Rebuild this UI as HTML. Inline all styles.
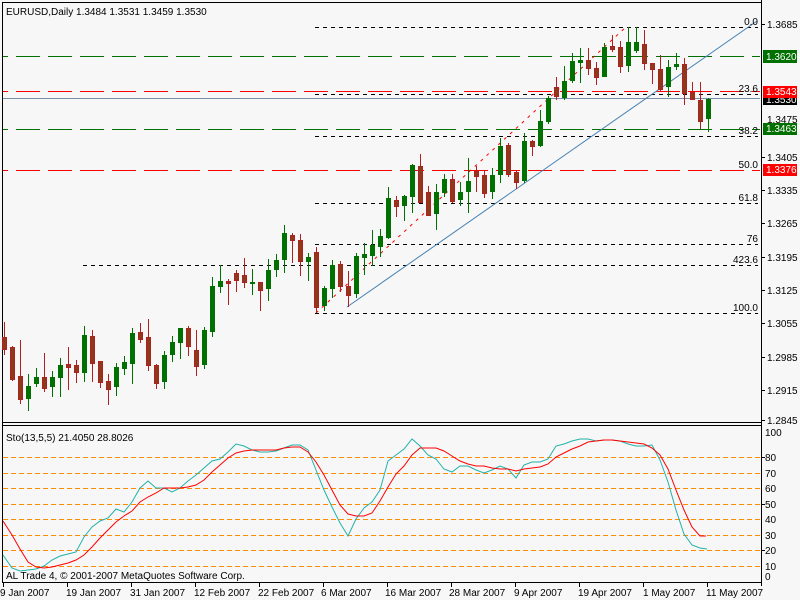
<!DOCTYPE html>
<html><head><meta charset="utf-8"><style>
html,body{margin:0;padding:0;background:#f7f7f7;}
svg{display:block;font-family:"Liberation Sans",sans-serif;font-size:10px;}
</style></head><body>
<svg width="800" height="600" viewBox="0 0 800 600" xmlns="http://www.w3.org/2000/svg">
<rect width="800" height="600" fill="#f7f7f7"/>
<g shape-rendering="crispEdges">
<line x1="2.5" y1="2" x2="2.5" y2="582" stroke="#000"/>
<line x1="2" y1="2.5" x2="761" y2="2.5" stroke="#000"/>
<line x1="761.5" y1="0" x2="761.5" y2="586" stroke="#000"/>
<line x1="2" y1="422.5" x2="761" y2="422.5" stroke="#000"/>
<line x1="2" y1="425.5" x2="761" y2="425.5" stroke="#000"/>
<line x1="2" y1="582.5" x2="761" y2="582.5" stroke="#000"/>

<line x1="3" y1="56.5" x2="760" y2="56.5" stroke="#007000" stroke-dasharray="24 8" stroke-dashoffset="19"/>
<line x1="3" y1="129.5" x2="760" y2="129.5" stroke="#007000" stroke-dasharray="24 8" stroke-dashoffset="19"/>
<line x1="3" y1="91.5" x2="760" y2="91.5" stroke="#ff0000" stroke-dasharray="24 8" stroke-dashoffset="19"/>
<line x1="3" y1="170.5" x2="760" y2="170.5" stroke="#ff0000" stroke-dasharray="24 8" stroke-dashoffset="19"/>
<line x1="3" y1="98.5" x2="760" y2="98.5" stroke="#7890a8"/>
<g stroke="#000" stroke-dasharray="4 4">
<line x1="315" y1="27.5" x2="758" y2="27.5"/>
<line x1="315" y1="94.5" x2="758" y2="94.5"/>
<line x1="315" y1="136.5" x2="758" y2="136.5"/>
<line x1="315" y1="203.5" x2="758" y2="203.5"/>
<line x1="315" y1="244.5" x2="758" y2="244.5"/>
<line x1="83" y1="265.5" x2="758" y2="265.5"/>
<line x1="315" y1="313.5" x2="758" y2="313.5"/>
</g>
</g>
<line x1="316" y1="313" x2="626" y2="27" stroke="#ff0000" stroke-dasharray="3 5"/>
<line x1="347" y1="307" x2="757" y2="21" stroke="#4682b4"/>

<g shape-rendering="crispEdges">
<g fill="#b02020">
<rect x="4" y="322" width="1" height="33"/><rect x="12" y="346" width="1" height="35"/><rect x="20" y="340" width="1" height="64"/><rect x="44" y="353" width="1" height="39"/><rect x="68" y="347" width="1" height="43"/><rect x="76" y="360" width="1" height="23"/><rect x="92" y="330" width="1" height="52"/><rect x="100" y="361" width="1" height="27"/><rect x="108" y="374" width="1" height="31"/><rect x="140" y="323" width="1" height="20"/><rect x="148" y="319" width="1" height="52"/><rect x="156" y="364" width="1" height="25"/><rect x="188" y="326" width="1" height="30"/><rect x="196" y="330" width="1" height="46"/><rect x="228" y="279" width="1" height="26"/><rect x="236" y="270" width="1" height="22"/><rect x="244" y="258" width="1" height="30"/><rect x="260" y="282" width="1" height="29"/><rect x="292" y="233" width="1" height="30"/><rect x="300" y="234" width="1" height="42"/><rect x="316" y="247" width="1" height="66"/><rect x="340" y="261" width="1" height="31"/><rect x="348" y="271" width="1" height="36"/><rect x="396" y="196" width="1" height="21"/><rect x="420" y="154" width="1" height="48"/><rect x="428" y="186" width="1" height="29"/><rect x="452" y="174" width="1" height="29"/><rect x="476" y="166" width="1" height="26"/><rect x="484" y="170" width="1" height="28"/><rect x="508" y="143" width="1" height="34"/><rect x="516" y="170" width="1" height="19"/><rect x="532" y="140" width="1" height="16"/><rect x="556" y="77" width="1" height="23"/><rect x="588" y="48" width="1" height="27"/><rect x="596" y="62" width="1" height="23"/><rect x="612" y="35" width="1" height="17"/><rect x="620" y="41" width="1" height="32"/><rect x="644" y="30" width="1" height="40"/><rect x="652" y="63" width="1" height="21"/><rect x="660" y="55" width="1" height="36"/><rect x="684" y="58" width="1" height="47"/><rect x="692" y="82" width="1" height="18"/><rect x="700" y="82" width="1" height="47"/>
</g>
<g fill="#8b3a1a" stroke="#b02020">
<rect x="2.5" y="337.5" width="4" height="12"/><rect x="10.5" y="347.5" width="4" height="32"/><rect x="18.5" y="376.5" width="4" height="23"/><rect x="42.5" y="377.5" width="4" height="11"/><rect x="66.5" y="364.5" width="4" height="3"/><rect x="74.5" y="365.5" width="4" height="7"/><rect x="90.5" y="336.5" width="4" height="27"/><rect x="98.5" y="361.5" width="4" height="21"/><rect x="106.5" y="381.5" width="4" height="8"/><rect x="138.5" y="332.5" width="4" height="7"/><rect x="146.5" y="337.5" width="4" height="28"/><rect x="154.5" y="365.5" width="4" height="18"/><rect x="186.5" y="328.5" width="4" height="18"/><rect x="194.5" y="350.5" width="4" height="16"/><rect x="226.5" y="281.5" width="4" height="2"/><rect x="234.5" y="273.5" width="4" height="7"/><rect x="242.5" y="275.5" width="4" height="7"/><rect x="258.5" y="282.5" width="4" height="8"/><rect x="290.5" y="235.5" width="4" height="5"/><rect x="298.5" y="240.5" width="4" height="21"/><rect x="314.5" y="252.5" width="4" height="55"/><rect x="338.5" y="264.5" width="4" height="22"/><rect x="346.5" y="286.5" width="4" height="9"/><rect x="394.5" y="200.5" width="4" height="6"/><rect x="418.5" y="166.5" width="4" height="36"/><rect x="426.5" y="192.5" width="4" height="23"/><rect x="450.5" y="179.5" width="4" height="22"/><rect x="474.5" y="171.5" width="4" height="5"/><rect x="482.5" y="175.5" width="4" height="18"/><rect x="506.5" y="145.5" width="4" height="29"/><rect x="514.5" y="172.5" width="4" height="10"/><rect x="530.5" y="141.5" width="4" height="5"/><rect x="554.5" y="87.5" width="4" height="9"/><rect x="586.5" y="60.5" width="4" height="8"/><rect x="594.5" y="68.5" width="4" height="9"/><rect x="610.5" y="46.5" width="4" height="3"/><rect x="618.5" y="47.5" width="4" height="19"/><rect x="642.5" y="44.5" width="4" height="19"/><rect x="650.5" y="63.5" width="4" height="6"/><rect x="658.5" y="69.5" width="4" height="20"/><rect x="682.5" y="64.5" width="4" height="29"/><rect x="690.5" y="92.5" width="4" height="7"/><rect x="698.5" y="100.5" width="4" height="21"/>
</g>
<g fill="#007000">
<rect x="28" y="374" width="1" height="37"/><rect x="26" y="386" width="5" height="13"/>
<rect x="36" y="368" width="1" height="19"/><rect x="34" y="377" width="5" height="7"/>
<rect x="52" y="371" width="1" height="26"/><rect x="50" y="377" width="5" height="10"/>
<rect x="60" y="358" width="1" height="39"/><rect x="58" y="365" width="5" height="13"/>
<rect x="84" y="326" width="1" height="56"/><rect x="82" y="335" width="5" height="38"/>
<rect x="116" y="363" width="1" height="33"/><rect x="114" y="367" width="5" height="20"/>
<rect x="124" y="356" width="1" height="19"/><rect x="122" y="362" width="5" height="7"/>
<rect x="132" y="328" width="1" height="56"/><rect x="130" y="333" width="5" height="31"/>
<rect x="164" y="351" width="1" height="38"/><rect x="162" y="355" width="5" height="27"/>
<rect x="172" y="336" width="1" height="26"/><rect x="170" y="342" width="5" height="13"/>
<rect x="180" y="328" width="1" height="31"/><rect x="178" y="328" width="5" height="15"/>
<rect x="204" y="327" width="1" height="42"/><rect x="202" y="330" width="5" height="35"/>
<rect x="212" y="277" width="1" height="60"/><rect x="210" y="286" width="5" height="46"/>
<rect x="220" y="265" width="1" height="28"/><rect x="218" y="281" width="5" height="6"/>
<rect x="252" y="269" width="1" height="26"/><rect x="250" y="282" width="5" height="2"/>
<rect x="268" y="259" width="1" height="42"/><rect x="266" y="270" width="5" height="19"/>
<rect x="276" y="254" width="1" height="23"/><rect x="274" y="260" width="5" height="10"/>
<rect x="284" y="225" width="1" height="48"/><rect x="282" y="233" width="5" height="27"/>
<rect x="308" y="253" width="1" height="28"/><rect x="306" y="257" width="5" height="5"/>
<rect x="324" y="286" width="1" height="25"/><rect x="322" y="288" width="5" height="18"/>
<rect x="332" y="260" width="1" height="38"/><rect x="330" y="265" width="5" height="24"/>
<rect x="356" y="253" width="1" height="45"/><rect x="354" y="256" width="5" height="38"/>
<rect x="364" y="243" width="1" height="32"/><rect x="362" y="254" width="5" height="4"/>
<rect x="372" y="230" width="1" height="36"/><rect x="370" y="245" width="5" height="11"/>
<rect x="380" y="229" width="1" height="28"/><rect x="378" y="236" width="5" height="11"/>
<rect x="388" y="187" width="1" height="52"/><rect x="386" y="198" width="5" height="40"/>
<rect x="404" y="195" width="1" height="26"/><rect x="402" y="196" width="5" height="10"/>
<rect x="412" y="164" width="1" height="49"/><rect x="410" y="165" width="5" height="32"/>
<rect x="436" y="184" width="1" height="46"/><rect x="434" y="192" width="5" height="22"/>
<rect x="444" y="174" width="1" height="23"/><rect x="442" y="179" width="5" height="14"/>
<rect x="460" y="182" width="1" height="24"/><rect x="458" y="192" width="5" height="8"/>
<rect x="468" y="158" width="1" height="55"/><rect x="466" y="181" width="5" height="11"/>
<rect x="492" y="168" width="1" height="31"/><rect x="490" y="175" width="5" height="17"/>
<rect x="500" y="138" width="1" height="45"/><rect x="498" y="146" width="5" height="29"/>
<rect x="524" y="133" width="1" height="50"/><rect x="522" y="141" width="5" height="40"/>
<rect x="540" y="110" width="1" height="37"/><rect x="538" y="121" width="5" height="25"/>
<rect x="548" y="96" width="1" height="28"/><rect x="546" y="98" width="5" height="24"/>
<rect x="564" y="66" width="1" height="34"/><rect x="562" y="81" width="5" height="17"/>
<rect x="572" y="53" width="1" height="30"/><rect x="570" y="61" width="5" height="20"/>
<rect x="580" y="48" width="1" height="35"/><rect x="578" y="60" width="5" height="3"/>
<rect x="604" y="43" width="1" height="34"/><rect x="602" y="47" width="5" height="30"/>
<rect x="628" y="27" width="1" height="45"/><rect x="626" y="42" width="5" height="24"/>
<rect x="636" y="27" width="1" height="26"/><rect x="634" y="42" width="5" height="9"/>
<rect x="668" y="60" width="1" height="37"/><rect x="666" y="67" width="5" height="20"/>
<rect x="676" y="53" width="1" height="17"/><rect x="674" y="64" width="5" height="3"/>
<rect x="708" y="98" width="1" height="34"/><rect x="706" y="99" width="5" height="20"/>
</g>
</g>

<g fill="#000" text-anchor="end">
<text x="758" y="25">0.0</text>
<text x="758" y="92">23.6</text>
<text x="758" y="134">38.2</text>
<text x="758" y="168">50.0</text>
<text x="758" y="201">61.8</text>
<text x="758" y="242">76</text>
<text x="758" y="263">423.6</text>
<text x="758" y="311">100.0</text>
</g>

<g stroke="#000" shape-rendering="crispEdges">
<line x1="762" y1="24.5" x2="765" y2="24.5"/><line x1="762" y1="157.5" x2="765" y2="157.5"/><line x1="762" y1="190.5" x2="765" y2="190.5"/><line x1="762" y1="223.5" x2="765" y2="223.5"/><line x1="762" y1="257.5" x2="765" y2="257.5"/><line x1="762" y1="290.5" x2="765" y2="290.5"/><line x1="762" y1="323.5" x2="765" y2="323.5"/><line x1="762" y1="357.5" x2="765" y2="357.5"/><line x1="762" y1="390.5" x2="765" y2="390.5"/><line x1="762" y1="420.5" x2="765" y2="420.5"/>
</g>
<g fill="#000">
<text x="767" y="28">1.3685</text>
<text x="767" y="123">1.3475</text>
<text x="767" y="161">1.3405</text>
<text x="767" y="194">1.3335</text>
<text x="767" y="227">1.3265</text>
<text x="767" y="261">1.3195</text>
<text x="767" y="294">1.3125</text>
<text x="767" y="327">1.3055</text>
<text x="767" y="361">1.2985</text>
<text x="767" y="394">1.2915</text>
<text x="767" y="424">1.2845</text>
</g>
<rect x="763" y="50" width="34" height="13" fill="#007000"/><text x="766" y="60" fill="#fff">1.3620</text>
<rect x="763" y="95" width="34" height="10" fill="#000"/><text x="766" y="103" fill="#fff">1.3530</text>
<rect x="763" y="86" width="34" height="12" fill="#ff0000"/><text x="766" y="95" fill="#fff">1.3543</text>
<rect x="763" y="123" width="34" height="12" fill="#007000"/><text x="766" y="132" fill="#fff">1.3463</text>
<rect x="763" y="164" width="34" height="12" fill="#ff0000"/><text x="766" y="173" fill="#fff">1.3376</text>

<text x="6" y="15" fill="#000">EURUSD,Daily  1.3484 1.3531 1.3459 1.3530</text>

<g stroke="#ff8c00" stroke-dasharray="5 3" shape-rendering="crispEdges">
<line x1="3" y1="457.5" x2="760" y2="457.5"/><line x1="3" y1="473.5" x2="760" y2="473.5"/><line x1="3" y1="488.5" x2="760" y2="488.5"/><line x1="3" y1="504.5" x2="760" y2="504.5"/><line x1="3" y1="519.5" x2="760" y2="519.5"/><line x1="3" y1="535.5" x2="760" y2="535.5"/><line x1="3" y1="550.5" x2="760" y2="550.5"/><line x1="3" y1="566.5" x2="760" y2="566.5"/>
</g>
<polyline fill="none" stroke="#20b2aa" points="3,555 12,568 20,571 28,570 36,569 44,566 52,560 60,556 68,554 76,552 84,537 92,527 100,521 108,518 116,509 124,512 132,502 140,488 148,481 156,488 164,488 172,492 180,488 188,481 196,475 204,468 212,461 220,459 228,452 236,444 244,446 252,450 260,452 268,452 276,451 284,448 292,445 300,445 308,450 316,470 324,490 332,507 340,523 348,536 356,519 364,508 372,502 380,490 388,461 396,455 404,449 412,439 420,446 428,455 436,459 444,469 452,472 460,466 468,466 476,470 484,473 492,470 500,466 508,469 516,478 524,465 532,462 540,462 548,459 556,446 564,444 572,441 580,439 588,439 596,441 604,440 612,440 620,441 628,444 636,446 644,446 652,445 660,460 668,482 676,510 684,534 692,545 700,548 707,549"/>
<polyline fill="none" stroke="#ff0000" points="3,521 12,535 20,549 28,562 36,567 44,568 52,567 60,565 68,563 76,560 84,555 92,547 100,538 108,530 116,522 124,516 132,511 140,502 148,497 156,493 164,488 172,488 180,488 188,487 196,485 204,480 212,472 220,465 228,458 236,453 244,451 252,450 260,450 268,450 276,450 284,448 292,447 300,447 308,452 316,462 324,475 332,490 340,505 348,514 356,516 364,516 372,513 380,501 388,487 396,474 404,466 412,455 420,448 428,448 436,448 444,451 452,456 460,461 468,464 476,466 484,466 492,468 500,469 508,469 516,471 524,469 532,468 540,467 548,464 556,457 564,453 572,449 580,446 588,442 596,441 604,440 612,440 620,441 628,442 636,443 644,444 652,448 660,455 668,469 676,490 684,510 692,527 700,536 706,536"/>
<text x="6" y="441" fill="#000">Sto(13,5,5) 21.4050 28.8026</text>
<text x="6" y="579" fill="#000">AL Trade 4, © 2001-2007 MetaQuotes Software Corp.</text>
<g fill="#000">
<text x="765" y="436">100</text><text x="765" y="461">80</text><text x="765" y="477">70</text><text x="765" y="492">60</text><text x="765" y="508">50</text><text x="765" y="523">40</text><text x="765" y="539">30</text><text x="765" y="554">20</text><text x="765" y="570">10</text><text x="765" y="580">0</text>
</g>
<g stroke="#000" shape-rendering="crispEdges">
<line x1="762" y1="457.5" x2="765" y2="457.5"/><line x1="762" y1="504.5" x2="765" y2="504.5"/><line x1="762" y1="550.5" x2="765" y2="550.5"/>
</g>

<g stroke="#000" shape-rendering="crispEdges">
<line x1="3.5" y1="583" x2="3.5" y2="587"/><line x1="67.5" y1="583" x2="67.5" y2="587"/><line x1="131.5" y1="583" x2="131.5" y2="587"/><line x1="195.5" y1="583" x2="195.5" y2="587"/><line x1="259.5" y1="583" x2="259.5" y2="587"/><line x1="323.5" y1="583" x2="323.5" y2="587"/><line x1="387.5" y1="583" x2="387.5" y2="587"/><line x1="451.5" y1="583" x2="451.5" y2="587"/><line x1="515.5" y1="583" x2="515.5" y2="587"/><line x1="579.5" y1="583" x2="579.5" y2="587"/><line x1="643.5" y1="583" x2="643.5" y2="587"/><line x1="707.5" y1="583" x2="707.5" y2="587"/>
</g>
<g fill="#000">
<text x="0" y="596">9 Jan 2007</text>
<text x="66" y="596">19 Jan 2007</text>
<text x="130" y="596">31 Jan 2007</text>
<text x="194" y="596">12 Feb 2007</text>
<text x="258" y="596">22 Feb 2007</text>
<text x="321" y="596">6 Mar 2007</text>
<text x="385" y="596">16 Mar 2007</text>
<text x="449" y="596">28 Mar 2007</text>
<text x="514" y="596">9 Apr 2007</text>
<text x="578" y="596">19 Apr 2007</text>
<text x="643" y="596">1 May 2007</text>
<text x="706" y="596">11 May 2007</text>
</g>
</svg>
</body></html>
